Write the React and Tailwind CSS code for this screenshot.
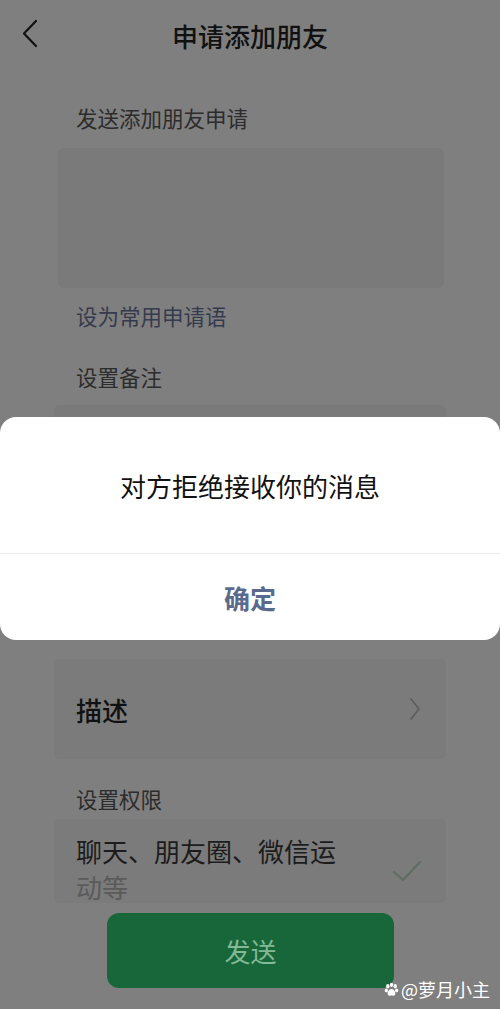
import React from 'react';

const font = { fontFamily: '"Noto Sans CJK SC", "Noto Sans", sans-serif' };

const App = () => {
    return (
        <div className="relative w-[500px] h-[1009px] overflow-hidden bg-[#7f7f7f]" style={font}>
            {/* Header */}
            <div className="relative h-[70px] flex items-center justify-center">
                <svg className="absolute left-[20px] top-[19px]" width="20" height="30" viewBox="0 0 20 30" fill="none">
                    <path d="M16 2 L4 14.5 L16 27" stroke="#111" strokeWidth="2.2" strokeLinecap="round" strokeLinejoin="round" />
                </svg>
                <h1 className="text-[26px] font-medium text-[#111]">申请添加朋友</h1>
            </div>

            {/* Body */}
            <div className="px-[58px]">
                <p className="mt-[34px] pl-[18px] text-[21.5px] leading-[28px] text-[#2c2c2c]">发送添加朋友申请</p>
                <div className="mt-[16px] h-[140px] w-[386px] rounded-[6px] bg-[#7a7a7a]"></div>
                <p className="mt-[14px] pl-[18px] text-[21.5px] leading-[28px] text-[#363a4d]">设为常用申请语</p>
                <p className="mt-[33px] pl-[18px] text-[21.5px] leading-[28px] text-[#2c2c2c]">设置备注</p>
                <div className="mt-[14px] h-[68px] w-[392px] -ml-[4px] rounded-[6px] bg-[#7a7a7a]"></div>
                <div className="mt-[186px] h-[100px] w-[392px] -ml-[4px] rounded-[6px] bg-[#7b7b7b] flex items-center justify-between pl-[22px] pr-[24px]">
                    <span className="text-[26px] font-medium text-[#111]">描述</span>
                    <svg width="14" height="26" viewBox="0 0 14 26" fill="none">
                        <path d="M3 3 L11 13 L3 23" stroke="#5e5e5e" strokeWidth="1.8" strokeLinecap="round" strokeLinejoin="round" />
                    </svg>
                </div>
                <p className="mt-[26px] pl-[18px] text-[21.5px] leading-[28px] text-[#2c2c2c]">设置权限</p>
                <div className="mt-[6px] h-[84px] w-[392px] -ml-[4px] rounded-[6px] bg-[#7b7b7b] flex items-start justify-between pl-[22px] pr-[24px] pt-[14px]">
                    <div className="text-[26px] leading-[36px]">
                        <p className="text-[#1c1c1c]">聊天、朋友圈、微信运</p>
                        <p className="text-[#5a5a5a]">动等</p>
                    </div>
                    <svg className="mt-[26px]" width="30" height="24" viewBox="0 0 30 24" fill="none">
                        <path d="M2 13 L11 21 L28 3" stroke="#5f6c62" strokeWidth="2" strokeLinecap="round" strokeLinejoin="round" />
                    </svg>
                </div>
            </div>

            {/* Send button */}
            <div className="absolute left-[107px] top-[913px] w-[287px] h-[75px] rounded-[12px] bg-[#17673a] flex items-center justify-center">
                <span className="text-[26px] text-[#82b996]">发送</span>
            </div>

            {/* Watermark */}
            <div className="absolute right-[10px] bottom-[6px] flex items-center gap-[2px] text-white text-[18px]">
                <svg width="15" height="15" viewBox="0 0 16 16" fill="white">
                    <ellipse cx="4" cy="4.5" rx="1.8" ry="2.3" />
                    <ellipse cx="8" cy="3" rx="1.8" ry="2.3" />
                    <ellipse cx="12" cy="4.5" rx="1.8" ry="2.3" />
                    <ellipse cx="2.5" cy="9" rx="1.7" ry="2" />
                    <ellipse cx="13.5" cy="9" rx="1.7" ry="2" />
                    <path d="M8 7.5 C5 7.5 3.5 11 4 13 C4.5 15 6.5 14.5 8 14.5 C9.5 14.5 11.5 15 12 13 C12.5 11 11 7.5 8 7.5 Z" />
                </svg>
                <span>@萝月小主</span>
            </div>

            {/* Dialog */}
            <div className="absolute left-0 top-[417px] w-[500px] h-[223px] rounded-[16px] bg-white flex flex-col">
                <div className="h-[136px] flex items-center justify-center">
                    <p className="text-[26px] text-[#111]">对方拒绝接收你的消息</p>
                </div>
                <div className="h-px bg-[#ececec]"></div>
                <div className="flex-1 flex items-center justify-center">
                    <span className="text-[26px] font-bold text-[#5a6a8e]">确定</span>
                </div>
            </div>
        </div>
    );
};

export default App;
